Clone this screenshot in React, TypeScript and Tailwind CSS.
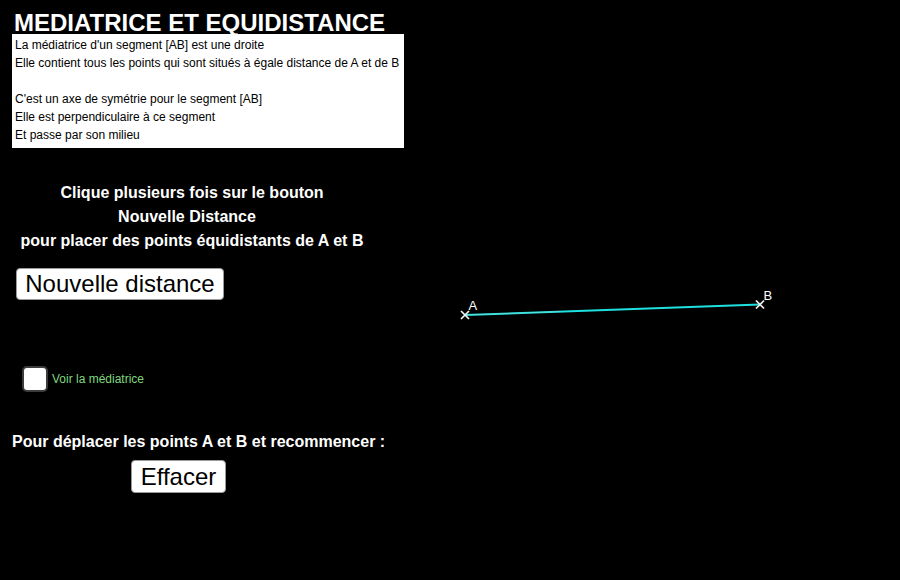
export default function App() {
  const lines = [
    "La médiatrice d'un segment [AB] est une droite",
    "Elle contient tous les points qui sont situés à égale distance de A et de B",
    "\u00a0",
    "C'est un axe de symétrie pour le segment [AB]",
    "Elle est perpendiculaire à ce segment",
    "Et passe par son milieu",
  ];

  return (
    <div
      className="relative w-[900px] h-[580px] bg-black overflow-hidden text-white"
      style={{ fontFamily: '"Liberation Sans", Arial, sans-serif' }}
    >
      {/* graphics view */}
      <svg className="absolute inset-0 pointer-events-none" width="900" height="580">
        <line x1="465" y1="315" x2="760" y2="304.5" stroke="#1fe0e0" strokeWidth="2" />
        <line x1="465" y1="315" x2="560" y2="311.6" stroke="#b8d8d8" strokeWidth="0.8" opacity="0.5" />
        <g stroke="#f2f2f2" strokeWidth="1.7">
          <line x1="461" y1="311" x2="469" y2="319" />
          <line x1="461" y1="319" x2="469" y2="311" />
          <line x1="756" y1="300.5" x2="764" y2="308.5" />
          <line x1="756" y1="308.5" x2="764" y2="300.5" />
        </g>
        <text x="468.5" y="310" fill="#fff" fontSize="13" fontFamily="Liberation Sans, Arial, sans-serif">A</text>
        <text x="763.5" y="299.5" fill="#fff" fontSize="13" fontFamily="Liberation Sans, Arial, sans-serif">B</text>
      </svg>

      <div className="relative flex flex-col items-start">
        <h1 className="pt-[11px] pl-[14px] text-[24px] leading-[23px] font-bold">
          MEDIATRICE ET EQUIDISTANCE
        </h1>

        <div className="ml-[12px] w-[392px] h-[114px] bg-white text-black pt-[2px] pl-[3px] text-[12px] leading-[18px]">
          {lines.map((l, i) => (
            <div key={i}>{l}</div>
          ))}
        </div>

        <div className="mt-[33px] w-[384px] text-center font-bold text-[16px] leading-[24px]">
          <div>Clique plusieurs fois sur le bouton</div>
          <div className="pr-[10px]">Nouvelle Distance</div>
          <div>pour placer des points équidistants de A et B</div>
        </div>

        <button className="mt-[15px] ml-[16px] w-[208px] h-[32px] bg-white text-black text-[24px] leading-none rounded-[4px] border border-[#9a9a9a] flex items-center justify-center">
          Nouvelle distance
        </button>

        <label className="mt-[66px] ml-[22px] flex items-center">
          <span className="w-[26px] h-[26px] bg-white border-2 border-[#3c3c3c] rounded-[5px]" />
          <span className="ml-[4px] text-[12px] text-[#7fd67f]">Voir la médiatrice</span>
        </label>

        <div className="mt-[38px] pl-[12px] font-bold text-[16px] leading-[24px]">
          Pour déplacer les points A et B et recommencer :
        </div>

        <button className="mt-[6px] ml-[131px] w-[95px] h-[33px] bg-white text-black text-[24px] leading-none rounded-[4px] border border-[#9a9a9a] flex items-center justify-center">
          Effacer
        </button>
      </div>
    </div>
  );
}
